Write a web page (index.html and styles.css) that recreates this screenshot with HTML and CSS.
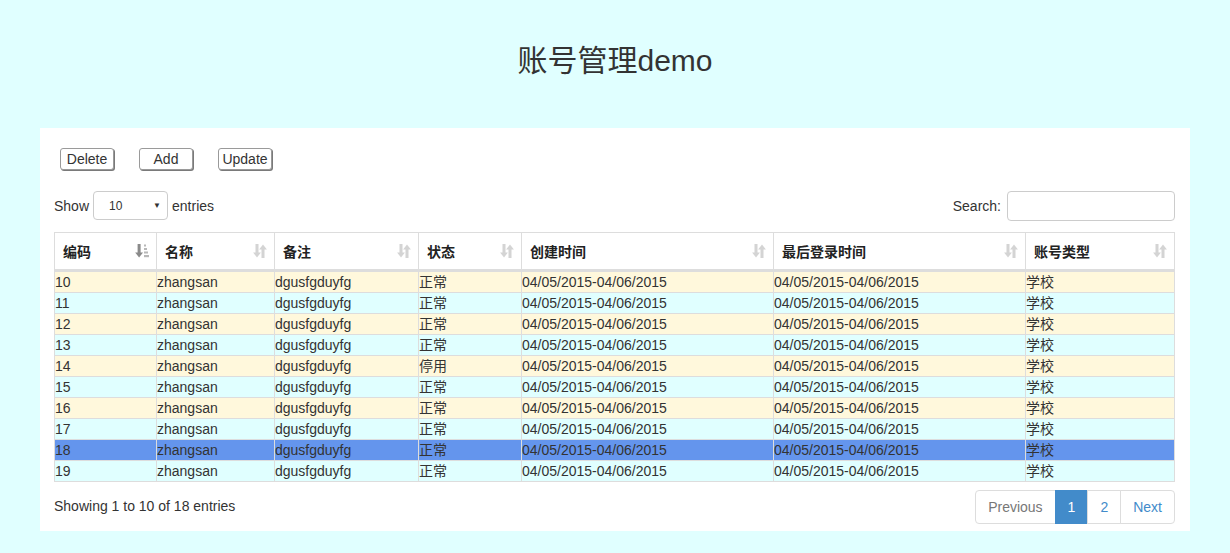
FILE: index.html
```html
<!DOCTYPE html>
<html>
<head>
<meta charset="utf-8">
<title>账号管理demo</title>
<link rel="stylesheet" href="styles.css">
</head>
<body>
<h2 class="title">账号管理demo</h2>
<div class="panel">
  <div class="toolbar">
    <button class="btn">Delete</button>
    <button class="btn">Add</button>
    <button class="btn">Update</button>
  </div>
  <div class="controls">
    <label class="length">Show
      <span class="select"><span class="sel-val">10</span><span class="sel-arrow">▼</span></span>
      entries</label>
    <label class="search">Search: <span class="input"></span></label>
  </div>
  <table class="grid">
    <colgroup>
      <col style="width:102px"><col style="width:118px"><col style="width:144px"><col style="width:103px"><col style="width:252px"><col style="width:252px"><col style="width:149px">
    </colgroup>
    <thead>
      <tr>
        <th><div class="th"><span>编码</span><svg class="sort" width="14" height="16" viewBox="0 0 14 16"><rect x="2.6" y="1" width="3" height="9.5" fill="#8a8a8a"/><polygon points="0.2,9.5 8,9.5 4.1,14.5" fill="#8a8a8a"/><rect x="9" y="1.5" width="2" height="2" fill="#b8b8b8"/><rect x="9" y="5" width="3" height="2" fill="#b8b8b8"/><rect x="9" y="8.5" width="4" height="2" fill="#b8b8b8"/><rect x="9" y="12" width="5" height="2.2" fill="#b8b8b8"/></svg></div></th>
        <th><div class="th"><span>名称</span><svg class="sort" width="14" height="16" viewBox="0 0 14 16"><g fill="#d4d4d4"><rect x="2.5" y="1" width="3" height="9.5"/><polygon points="0.1,9.5 7.9,9.5 4,14.5"/><rect x="8.5" y="5.5" width="3" height="9.5"/><polygon points="6.1,6.5 13.9,6.5 10,1.5"/></g></svg></div></th>
        <th><div class="th"><span>备注</span><svg class="sort" width="14" height="16" viewBox="0 0 14 16"><g fill="#d4d4d4"><rect x="2.5" y="1" width="3" height="9.5"/><polygon points="0.1,9.5 7.9,9.5 4,14.5"/><rect x="8.5" y="5.5" width="3" height="9.5"/><polygon points="6.1,6.5 13.9,6.5 10,1.5"/></g></svg></div></th>
        <th><div class="th"><span>状态</span><svg class="sort" width="14" height="16" viewBox="0 0 14 16"><g fill="#d4d4d4"><rect x="2.5" y="1" width="3" height="9.5"/><polygon points="0.1,9.5 7.9,9.5 4,14.5"/><rect x="8.5" y="5.5" width="3" height="9.5"/><polygon points="6.1,6.5 13.9,6.5 10,1.5"/></g></svg></div></th>
        <th><div class="th"><span>创建时间</span><svg class="sort" width="14" height="16" viewBox="0 0 14 16"><g fill="#d4d4d4"><rect x="2.5" y="1" width="3" height="9.5"/><polygon points="0.1,9.5 7.9,9.5 4,14.5"/><rect x="8.5" y="5.5" width="3" height="9.5"/><polygon points="6.1,6.5 13.9,6.5 10,1.5"/></g></svg></div></th>
        <th><div class="th"><span>最后登录时间</span><svg class="sort" width="14" height="16" viewBox="0 0 14 16"><g fill="#d4d4d4"><rect x="2.5" y="1" width="3" height="9.5"/><polygon points="0.1,9.5 7.9,9.5 4,14.5"/><rect x="8.5" y="5.5" width="3" height="9.5"/><polygon points="6.1,6.5 13.9,6.5 10,1.5"/></g></svg></div></th>
        <th><div class="th"><span>账号类型</span><svg class="sort" width="14" height="16" viewBox="0 0 14 16"><g fill="#d4d4d4"><rect x="2.5" y="1" width="3" height="9.5"/><polygon points="0.1,9.5 7.9,9.5 4,14.5"/><rect x="8.5" y="5.5" width="3" height="9.5"/><polygon points="6.1,6.5 13.9,6.5 10,1.5"/></g></svg></div></th>
      </tr>
    </thead>
    <tbody>
      <tr class="odd"><td>10</td><td>zhangsan</td><td>dgusfgduyfg</td><td>正常</td><td>04/05/2015-04/06/2015</td><td>04/05/2015-04/06/2015</td><td>学校</td></tr>
      <tr class="even"><td>11</td><td>zhangsan</td><td>dgusfgduyfg</td><td>正常</td><td>04/05/2015-04/06/2015</td><td>04/05/2015-04/06/2015</td><td>学校</td></tr>
      <tr class="odd"><td>12</td><td>zhangsan</td><td>dgusfgduyfg</td><td>正常</td><td>04/05/2015-04/06/2015</td><td>04/05/2015-04/06/2015</td><td>学校</td></tr>
      <tr class="even"><td>13</td><td>zhangsan</td><td>dgusfgduyfg</td><td>正常</td><td>04/05/2015-04/06/2015</td><td>04/05/2015-04/06/2015</td><td>学校</td></tr>
      <tr class="odd"><td>14</td><td>zhangsan</td><td>dgusfgduyfg</td><td>停用</td><td>04/05/2015-04/06/2015</td><td>04/05/2015-04/06/2015</td><td>学校</td></tr>
      <tr class="even"><td>15</td><td>zhangsan</td><td>dgusfgduyfg</td><td>正常</td><td>04/05/2015-04/06/2015</td><td>04/05/2015-04/06/2015</td><td>学校</td></tr>
      <tr class="odd"><td>16</td><td>zhangsan</td><td>dgusfgduyfg</td><td>正常</td><td>04/05/2015-04/06/2015</td><td>04/05/2015-04/06/2015</td><td>学校</td></tr>
      <tr class="even"><td>17</td><td>zhangsan</td><td>dgusfgduyfg</td><td>正常</td><td>04/05/2015-04/06/2015</td><td>04/05/2015-04/06/2015</td><td>学校</td></tr>
      <tr class="selected"><td>18</td><td>zhangsan</td><td>dgusfgduyfg</td><td>正常</td><td>04/05/2015-04/06/2015</td><td>04/05/2015-04/06/2015</td><td>学校</td></tr>
      <tr class="even"><td>19</td><td>zhangsan</td><td>dgusfgduyfg</td><td>正常</td><td>04/05/2015-04/06/2015</td><td>04/05/2015-04/06/2015</td><td>学校</td></tr>
    </tbody>
  </table>
  <div class="footer">
    <div class="info">Showing 1 to 10 of 18 entries</div>
    <ul class="pagination">
      <li class="disabled"><a>Previous</a></li>
      <li class="active"><a>1</a></li>
      <li><a>2</a></li>
      <li><a>Next</a></li>
    </ul>
  </div>
</div>
</body>
</html>
```

FILE: styles.css
```css
html, body {
  margin: 0;
  padding: 0;
}
body {
  background: #e0ffff;
  font-family: "Liberation Sans", Arial, "Noto Sans CJK SC", sans-serif;
  font-size: 14px;
  line-height: 20px;
  color: #333;
}
.title {
  margin: 44px 0 0;
  font-size: 30px;
  line-height: 33px;
  font-weight: normal;
  text-align: center;
  color: #333;
}
.panel {
  margin: 51px 40px 0;
  background: #fff;
  padding: 20px 16px 7px 14px;
}
.toolbar {
  display: flex;
  gap: 25px;
  padding-left: 6px;
}
.btn {
  width: 54px;
  height: 22px;
  padding: 0;
  background: #fff;
  border: 1px solid #9a9a9a;
  border-radius: 3px;
  box-shadow: 1px 1px 0 #7a7a7a;
  font-family: "Liberation Sans", Arial, sans-serif;
  font-size: 14px;
  line-height: 18px;
  color: #333;
}
.controls {
  display: flex;
  justify-content: space-between;
  align-items: center;
  margin-top: 21px;
  height: 30px;
}
.length, .search {
  display: flex;
  align-items: center;
  gap: 4px;
}
.length {
  margin-top: -1px;
}
.select {
  display: flex;
  align-items: center;
  justify-content: space-between;
  box-sizing: border-box;
  width: 75px;
  height: 29px;
  padding: 0 6px 0 15px;
  border: 1px solid #ccc;
  border-radius: 4px;
  font-size: 12px;
  margin: 0;
}
.sel-arrow {
  font-size: 8px;
  color: #333;
}
.input {
  display: block;
  box-sizing: border-box;
  width: 168px;
  height: 30px;
  border: 1px solid #ccc;
  border-radius: 4px;
  margin-left: 2px;
}
.search {
  margin-right: -1px;
  margin-top: -1px;
}
.grid {
  margin-top: 11px;
  width: 1120px;
  border-collapse: collapse;
  table-layout: fixed;
}
.grid th, .grid td {
  border: 1px solid #ddd;
  text-align: left;
}
.grid th {
  padding: 8px 8px 8px 8px;
  border-bottom: 3px solid #ddd;
  font-family: "Noto Sans CJK SC", sans-serif;
  font-weight: bold;
  font-size: 14px;
  line-height: 20px;
  color: #222;
  background: #fff;
}
.th {
  display: flex;
  justify-content: space-between;
  align-items: center;
}
.sort {
  margin-right: -1px;
}
.grid td {
  padding: 0;
  height: 20px;
  line-height: 20px;
  white-space: nowrap;
  overflow: hidden;
  font-family: "Liberation Sans", Arial, "Noto Sans CJK SC", sans-serif;
  color: #333;
}
.grid tr.odd td { background: #fff8dc; }
.grid tr.even td { background: #e0ffff; }
.grid tr.selected td { background: #6495ed; }
.footer {
  display: flex;
  justify-content: space-between;
  align-items: center;
  margin-top: 8px;
}
.info {
  margin-top: -3px;
}
.pagination {
  display: flex;
  list-style: none;
  margin: 0 -1px 0 0;
  padding: 0;
}
.pagination a {
  display: block;
  padding: 6px 12px;
  line-height: 20px;
  border: 1px solid #ddd;
  margin-left: -1px;
  color: #428bca;
  background: #fff;
}
.pagination li:first-child a {
  border-radius: 4px 0 0 4px;
  margin-left: 0;
}
.pagination li:last-child a {
  border-radius: 0 4px 4px 0;
}
.pagination .disabled a {
  color: #777;
}
.pagination .active a {
  background: #428bca;
  border-color: #428bca;
  color: #fff;
}
```
